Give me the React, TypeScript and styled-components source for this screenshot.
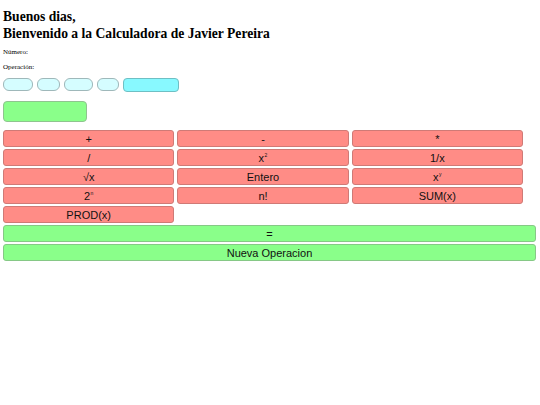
import React from "react";
import styled, { createGlobalStyle } from "styled-components";

const Global = createGlobalStyle`
  html, body { margin: 0; padding: 0; background: #ffffff; }
  body { font-family: "Liberation Serif", "Times New Roman", serif; color: #000; }
`;

const Page = styled.div`
  padding: 8px 4px 0 3px;
`;

const Heading = styled.h1`
  margin: 0;
  font-family: "Liberation Serif", "Times New Roman", serif;
  font-weight: bold;
  font-size: 13.6px;
  line-height: 17px;
`;

const Label = styled.div`
  font-family: "Liberation Serif", "Times New Roman", serif;
  font-size: 7px;
  line-height: 15px;
`;

const Labels = styled.div`
  margin-top: 3px;
`;

const InputRow = styled.div`
  display: flex;
  align-items: flex-start;
  gap: 3px;
  margin-top: 3px;
  height: 14px;
`;

const Field = styled.div<{ $w: number }>`
  box-sizing: border-box;
  width: ${(p) => p.$w}px;
  height: 13px;
  background: #d5fdff;
  border: 1px solid #9fb8ba;
  border-radius: 6px;
  margin-right: 1px;
`;

const CyanButton = styled.div`
  box-sizing: border-box;
  width: 56px;
  height: 14px;
  background: #88f9ff;
  border: 1px solid #6fbfc4;
  border-radius: 4px;
`;

const GreenBox = styled.div`
  box-sizing: border-box;
  width: 84px;
  height: 21px;
  margin-top: 9px;
  background: #8aff8a;
  border: 1px solid #8fc48f;
  border-radius: 4px;
`;

const Grid = styled.div`
  display: grid;
  width: 520px;
  grid-template-columns: repeat(3, 1fr);
  column-gap: 3px;
  row-gap: 2px;
  margin-top: 8px;
`;

const Key = styled.div<{ $green?: boolean }>`
  box-sizing: border-box;
  height: 17px;
  background: ${(p) => (p.$green ? "#8aff8a" : "#ff8c86")};
  border: 1px solid ${(p) => (p.$green ? "#86c886" : "#cf7a76")};
  border-radius: 3px;
  display: flex;
  align-items: center;
  justify-content: center;
  font-family: "Liberation Sans", Arial, sans-serif;
  font-size: 11px;
  color: #111;
`;

const WideKeys = styled.div`
  display: flex;
  flex-direction: column;
  gap: 2px;
  margin-top: 2px;
`;

const Sup = styled.span`
  font-size: 5px;
  position: relative;
  top: -3px;
  margin-left: 0.5px;
`;

export default function App() {
  const keys: React.ReactNode[] = [
    "+",
    "-",
    "*",
    "/",
    <>x<Sup>2</Sup></>,
    "1/x",
    "√x",
    "Entero",
    <>x<Sup>y</Sup></>,
    <>2<Sup>n</Sup></>,
    "n!",
    "SUM(x)",
    "PROD(x)",
  ];
  return (
    <>
      <Global />
      <Page>
        <Heading>
          Buenos dias,
          <br />
          Bienvenido a la Calculadora de Javier Pereira
        </Heading>
        <Labels>
          <Label>Número:</Label>
          <Label>Operación:</Label>
        </Labels>
        <InputRow>
          <Field $w={30} />
          <Field $w={23} />
          <Field $w={29} />
          <Field $w={22} />
          <CyanButton />
        </InputRow>
        <GreenBox />
        <Grid>
          {keys.map((k, i) => (
            <Key key={i}>{k}</Key>
          ))}
        </Grid>
        <WideKeys>
          <Key $green>=</Key>
          <Key $green>Nueva Operacion</Key>
        </WideKeys>
      </Page>
    </>
  );
}
